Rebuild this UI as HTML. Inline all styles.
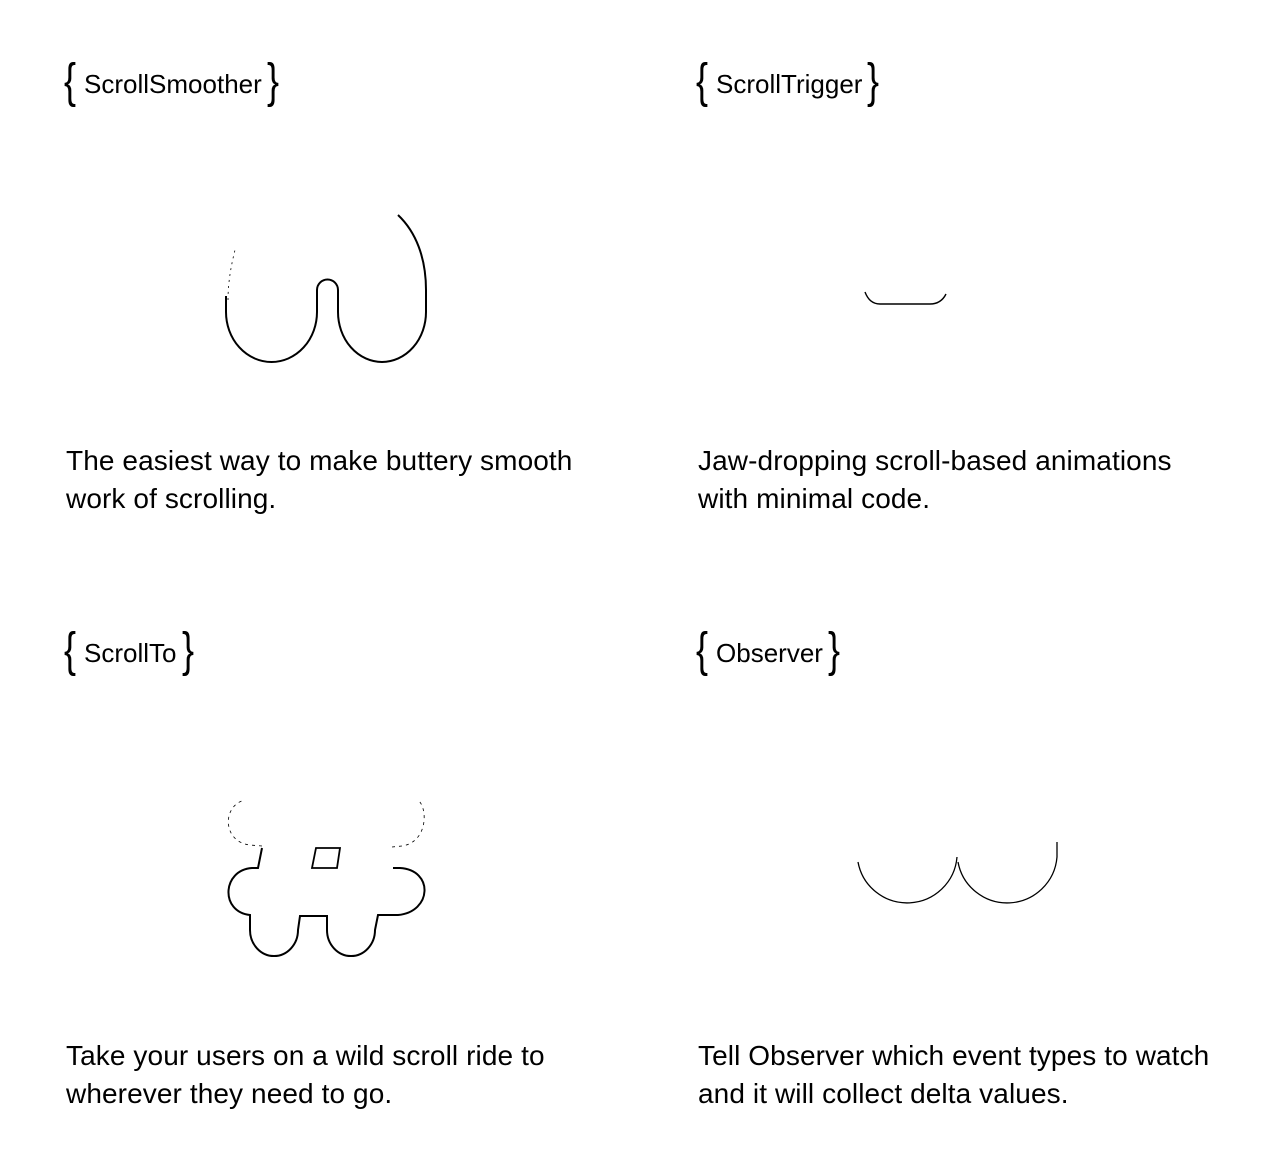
<!DOCTYPE html>
<html><head><meta charset="utf-8"><style>
html,body{margin:0;padding:0;background:#fff;}
body{width:1280px;height:1174px;position:relative;overflow:hidden;font-family:"Liberation Sans",sans-serif;color:#000;}
.h{position:absolute;font-size:26px;line-height:48px;display:flex;align-items:center;}
.b{font-size:48px;font-weight:300;line-height:48px;transform:scaleX(0.75);display:inline-block;margin-top:-4px;}
.b.l{margin-right:6px;}
.b.r{margin-left:3px;}
.d{position:absolute;font-size:28px;line-height:38px;letter-spacing:0.1px;}
svg{position:absolute;left:0;top:0;}
</style></head><body>
<div class="h" style="left:62px;top:60px"><span class="b l">{</span>ScrollSmoother<span class="b r">}</span></div>
<div class="h" style="left:694px;top:60px"><span class="b l">{</span>ScrollTrigger<span class="b r">}</span></div>
<div class="h" style="left:62px;top:629px"><span class="b l">{</span>ScrollTo<span class="b r">}</span></div>
<div class="h" style="left:694px;top:629px"><span class="b l">{</span>Observer<span class="b r">}</span></div>

<div class="d" style="left:66px;top:442px">The easiest way to make buttery smooth<br>work of scrolling.</div>
<div class="d" style="left:698px;top:442px">Jaw-dropping scroll-based animations<br>with minimal code.</div>
<div class="d" style="left:66px;top:1037px">Take your users on a wild scroll ride to<br>wherever they need to go.</div>
<div class="d" style="left:698px;top:1037px">Tell Observer which event types to watch<br>and it will collect delta values.</div>

<svg width="1280" height="1174" viewBox="0 0 1280 1174" fill="none" stroke="#000">
<path d="M226,296 L226,312 A45.5 50 0 0 0 317,312 L317,290 A10.5 10.5 0 0 1 338,290 L338,312 A44 50 0 0 0 426,312 L426,290 C426,258 416,232 398,215" stroke-width="2"/>
<path d="M228,300 C228,280 232,262 235,250" stroke-width="0.8" stroke-dasharray="2 4"/>
<path d="M865,292 C868,300 873,304 880,304 L930,304 C938,304 943,300 946,294" stroke-width="1.4"/>
<path d="M262,848 L258,868 L252,868 C222,870 220,912 250,915 L250,930 A24 26 0 0 0 298,930 L300,916 L327,916 L327,930 A24 26 0 0 0 375,930 L378,915 L398,915 C432,912 434,870 400,868 L393,868" stroke-width="2"/>
<path d="M262,846 L250,845 C222,842 222,805 245,800" stroke-width="0.8" stroke-dasharray="3 4"/>
<path d="M392,847 L402,846 C428,842 428,808 418,800" stroke-width="0.8" stroke-dasharray="3 4"/>
<path d="M316,848 L340,848 L337,868 L312,868 Z" stroke-width="1.8"/>
<path d="M858,862 A50 50 0 0 0 957,857" stroke-width="1.3"/>
<path d="M958,862 A50 50 0 0 0 1057,857 L1057,842" stroke-width="1.3"/>
</svg>
</body></html>
